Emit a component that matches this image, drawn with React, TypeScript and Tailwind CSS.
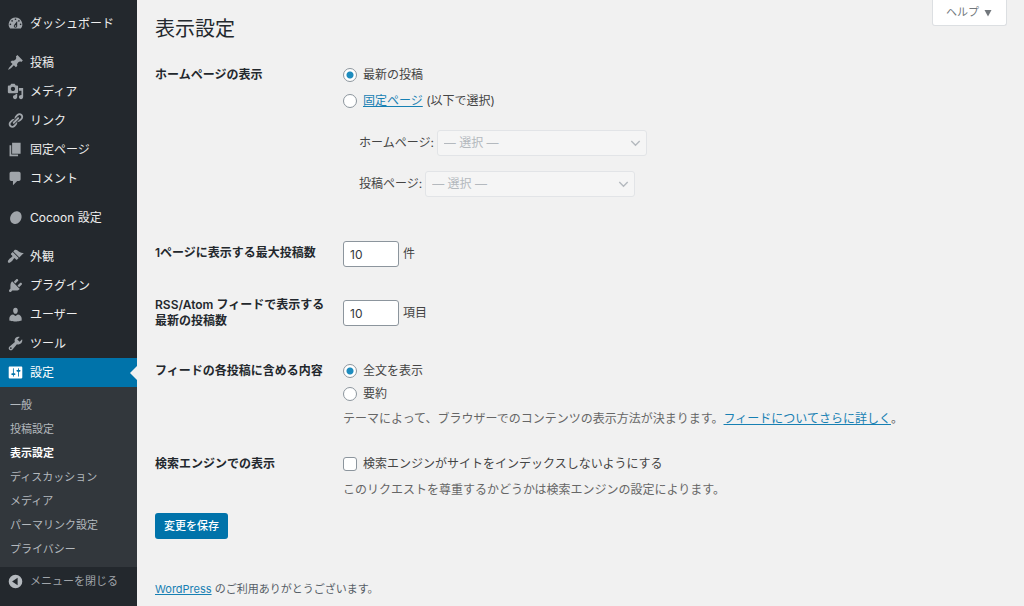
import type { ReactNode } from 'react';

const icons = {
    dashboard: "M3.76 16h12.48A7.998 7.998 0 0 0 10 3a7.998 7.998 0 0 0-6.24 13zM10 4c.55 0 1 .45 1 1s-.45 1-1 1-1-.45-1-1 .45-1 1-1zM6 6c.55 0 1 .45 1 1s-.45 1-1 1-1-.45-1-1 .45-1 1-1zm8 0c.55 0 1 .45 1 1s-.45 1-1 1-1-.45-1-1 .45-1 1-1zm-5.37 5.55L12 7v6c0 1.1-.9 2-2 2s-2-.9-2-2c0-.57.24-1.08.63-1.45zM4 10c.55 0 1 .45 1 1s-.45 1-1 1-1-.45-1-1 .45-1 1-1zm12 0c.55 0 1 .45 1 1s-.45 1-1 1-1-.45-1-1 .45-1 1-1zm-5 3c0-.55-.45-1-1-1s-1 .45-1 1 .45 1 1 1 1-.45 1-1z",
    post: "M10.44 3.02l1.82-1.82 6.36 6.35-1.83 1.82c-1.05-.68-2.48-.57-3.41.36l-.75.75c-.92.93-1.04 2.35-.35 3.41l-1.83 1.82-2.41-2.41-2.8 2.79c-.42.42-3.38 2.71-3.8 2.29s1.86-3.39 2.28-3.81l2.79-2.79L4.1 9.36l1.83-1.82c1.05.69 2.48.57 3.4-.36l.75-.75c.93-.92 1.05-2.35.36-3.41z",
    media: "M13 11V4c0-.55-.45-1-1-1h-1.67L9 1H5L3.67 3H2c-.55 0-1 .45-1 1v7c0 .55.45 1 1 1h10c.55 0 1-.45 1-1zM7 4.5c1.38 0 2.5 1.12 2.5 2.5S8.38 9.5 7 9.5 4.5 8.38 4.5 7 5.62 4.5 7 4.5zM14 6h5v10.5c0 1.38-1.12 2.5-2.5 2.5S14 17.88 14 16.5s1.12-2.5 2.5-2.5c.17 0 .34.02.5.05V9h-3V6zm-4 8.05V13h2v3.5c0 1.38-1.12 2.5-2.5 2.5S7 17.88 7 16.5 8.12 14 9.5 14c.17 0 .34.02.5.05z",
    links: "M17.74 2.76c1.68 1.69 1.68 4.41 0 6.1l-1.53 1.52c-1.12 1.12-2.7 1.47-4.14 1.09l2.62-2.61.76-.77.76-.76c.84-.84.84-2.2 0-3.04-.84-.85-2.2-.85-3.04 0l-.77.76-3.38 3.38c-.37-1.44-.02-3.02 1.1-4.14l1.52-1.53c1.69-1.68 4.42-1.68 6.1 0zM8.59 13.43l5.34-5.34c.42-.42.42-1.1 0-1.52-.44-.43-1.13-.39-1.53 0l-5.33 5.34c-.42.42-.42 1.1 0 1.52.44.43 1.13.39 1.52 0zm-.76 2.29l4.14-4.15c.38 1.44.03 3.02-1.09 4.14l-1.52 1.53c-1.69 1.68-4.41 1.68-6.1 0-1.68-1.68-1.68-4.42 0-6.1l1.53-1.52c1.12-1.12 2.7-1.47 4.14-1.1l-4.14 4.15c-.85.84-.85 2.2 0 3.05.84.84 2.2.84 3.04 0z",
    page: "M6 15V2h10v13H6zm-1 1h8v2H3V5h2v11z",
    comments: "M5 2h9c1.1 0 2 .9 2 2v7c0 1.1-.9 2-2 2h-2l-5 5v-5H5c-1.1 0-2-.9-2-2V4c0-1.1.9-2 2-2z",
    cocoon: "M12 2.6c3.6.4 5.6 3.6 5.1 7.4-.6 4.4-4 8-8 7.6C5.3 17.2 3.2 13.8 3.7 10.2 4.3 5.9 8 2.2 12 2.6z",
    appearance: "M14.48 11.06L7.41 3.99l1.5-1.5c.5-.56 2.3-.47 3.51.32 1.21.8 1.43 1.28 2.91 2.1 1.18.64 2.45 1.26 4.45.85zm-.71.71L6.7 4.7 4.93 6.47c-.39.39-.39 1.02 0 1.41l1.06 1.06c.39.39.39 1.03 0 1.42-.6.6-1.43 1.11-2.21 1.69-.35.26-.7.53-1.01.84C1.43 14.23.4 16.08 1.4 17.07c.99 1 2.84-.03 4.18-1.36.31-.31.58-.66.85-1.02.57-.78 1.08-1.61 1.69-2.21.39-.39 1.02-.39 1.41 0l1.06 1.06c.39.39 1.02.39 1.41 0z",
    plugins: "M13.11 4.36L9.87 7.6 8 5.73l3.24-3.24c.35-.34 1.05-.2 1.56.32.52.51.66 1.21.31 1.55zm-8 1.77l.91-1.12 9.01 9.01-1.19.84c-.71.71-2.63 1.16-3.82 1.16H6.14L4.9 17.26c-.59.59-1.54.59-2.12 0-.59-.58-.59-1.53 0-2.12l1.24-1.24v-3.88c0-1.13.4-3.19 1.09-3.89zm7.26 3.97l3.24-3.24c.34-.35 1.04-.21 1.55.31.52.51.66 1.21.31 1.55l-3.24 3.25z",
    users: "M10 9.25c-2.27 0-2.73-3.44-2.73-3.44C7 4.02 7.82 2 9.97 2c2.16 0 2.98 2.02 2.71 3.81 0 0-.41 3.44-2.68 3.44zm0 2.57L12.72 10c2.39 0 4.52 2.33 4.52 4.53v2.49s-3.65 1.13-7.24 1.13c-3.65 0-7.24-1.13-7.24-1.13v-2.49c0-2.25 1.94-4.48 4.47-4.48z",
    tools: "M16.68 9.77c-1.34 1.34-3.3 1.67-4.95.99l-5.41 6.52c-.99.99-2.59.99-3.58 0s-.99-2.59 0-3.57l6.52-5.42c-.68-1.65-.35-3.61.99-4.95 1.28-1.28 3.12-1.62 4.72-1.06l-2.89 2.89 2.82 2.82 2.86-2.87c.53 1.58.18 3.39-1.08 4.65zM3.81 16.21c.4.39 1.04.39 1.43 0 .4-.4.4-1.04 0-1.43-.39-.4-1.03-.4-1.43 0-.39.39-.39 1.03 0 1.43z",
    settings: "M18 16V4c0-.55-.45-1-1-1H3c-.55 0-1 .45-1 1v12c0 .55.45 1 1 1h14c.55 0 1-.45 1-1zM8 11h1c.55 0 1 .45 1 1s-.45 1-1 1H8v1.5c0 .28-.22.5-.5.5s-.5-.22-.5-.5V13H6c-.55 0-1-.45-1-1s.45-1 1-1h1V5.5c0-.28.22-.5.5-.5s.5.22.5.5V11zm5-2h-1c-.55 0-1-.45-1-1s.45-1 1-1h1V5.5c0-.28.22-.5.5-.5s.5.22.5.5V7h1c.55 0 1 .45 1 1s-.45 1-1 1h-1v5.5c0 .28-.22.5-.5.5s-.5-.22-.5-.5V9z",
    collapse: "M10 2a8 8 0 1 0 0 16 8 8 0 0 0 0-16zM12.5 5.5v9L6 10z",
};

type IconName = keyof typeof icons;

const menuGroups: { icon: IconName; label: string; active?: boolean }[][] = [
    [{ icon: "dashboard", label: "ダッシュボード" }],
    [
        { icon: "post", label: "投稿" },
        { icon: "media", label: "メディア" },
        { icon: "links", label: "リンク" },
        { icon: "page", label: "固定ページ" },
        { icon: "comments", label: "コメント" },
    ],
    [{ icon: "cocoon", label: "Cocoon 設定" }],
    [
        { icon: "appearance", label: "外観" },
        { icon: "plugins", label: "プラグイン" },
        { icon: "users", label: "ユーザー" },
        { icon: "tools", label: "ツール" },
        { icon: "settings", label: "設定", active: true },
    ],
];

const submenu = ["一般", "投稿設定", "表示設定", "ディスカッション", "メディア", "パーマリンク設定", "プライバシー"];

const radioClass = "size-3.5 shrink-0 appearance-none rounded-full border border-[#8c959d] bg-white checked:bg-[radial-gradient(circle,#1e8cbe_3px,#ffffff_4px)]";
const linkClass = "text-[#1780b3] underline";

function Icon({ name, className }: { name: IconName; className: string }) {
    return (
        <svg viewBox="0 0 20 20" fill="currentColor" fillRule="evenodd" aria-hidden="true" className={`size-[17px] shrink-0 ${className}`}>
            <path d={icons[name]} />
        </svg>
    );
}

function Sidebar() {
    return (
        <nav className="w-[137px] shrink-0 bg-[#23282d] pt-[9px] text-xs text-[#eeeeee]">
            <div className="flex flex-col gap-2.5">
                {menuGroups.map((group, i) => (
                    <ul key={i}>
                        {group.map((item) => (
                            <li key={item.label}>
                                <a
                                    href="#"
                                    className={`relative flex h-[29px] items-center gap-1.5 pl-[7px] ${item.active ? "bg-[#0073aa] text-white" : ""}`}
                                >
                                    <Icon name={item.icon} className={item.active ? "text-white" : "text-[#a0a5aa]"} />
                                    {item.label}
                                    {item.active && (
                                        <span className="absolute top-1/2 right-0 -translate-y-1/2 border-y-[7px] border-r-[7px] border-y-transparent border-r-[#f1f1f1]" />
                                    )}
                                </a>
                            </li>
                        ))}
                    </ul>
                ))}
            </div>
            <ul className="bg-[#32373c] py-1.5 text-[11px] leading-6 text-[#b4b9be]">
                {submenu.map((label) => (
                    <li key={label}>
                        <a href="#" className={`block pl-2.5 ${label === "表示設定" ? "font-bold text-white" : ""}`}>{label}</a>
                    </li>
                ))}
            </ul>
            <button type="button" className="flex h-[29px] items-center gap-1.5 pl-[7px] text-[11px] text-[#a0a5aa]">
                <Icon name="collapse" className="text-[#b4b9be]" />
                メニューを閉じる
            </button>
        </nav>
    );
}

function Row({ label, htmlFor, className, children }: { label: ReactNode; htmlFor?: string; className: string; children: ReactNode }) {
    const labelClass = "w-[188px] shrink-0 self-start py-[17px] pr-2 leading-4 font-semibold text-[#23282d]";
    return (
        <div className="flex items-center" role={htmlFor ? undefined : "group"}>
            {htmlFor ? <label htmlFor={htmlFor} className={labelClass}>{label}</label> : <div className={labelClass}>{label}</div>}
            <div className={`grow ${className}`}>{children}</div>
        </div>
    );
}

function PageSelect({ id, label }: { id: string; label: string }) {
    return (
        <li className="flex items-center gap-[3px]">
            <label htmlFor={id}>{label}</label>
            <div className="relative w-[210px]">
                <select id={id} disabled className="h-[26px] w-full appearance-none rounded-[3px] border border-[#e2e4e7] bg-[#f5f5f5] px-1.5 text-[#b4b9be] opacity-100">
                    <option>— 選択 —</option>
                </select>
                <svg viewBox="0 0 12 8" fill="none" stroke="#b4b9be" strokeWidth="1.6" className="pointer-events-none absolute top-[10px] right-[6px] h-[7px] w-[11px]">
                    <path d="M1.2 1.2L6 6l4.8-4.8" />
                </svg>
            </div>
        </li>
    );
}

function NumberField({ id, unit }: { id: string; unit: string }) {
    return (
        <div className="flex items-center gap-1">
            <input id={id} type="number" defaultValue={10} className="h-[26px] w-14 appearance-none rounded-[3px] border border-[#8c959d] bg-white px-1.5 text-[#32373c] [&::-webkit-inner-spin-button]:appearance-none" />
            <span>{unit}</span>
        </div>
    );
}

export default function App() {
    return (
        <div lang="ja" className="flex min-h-screen bg-[#f1f1f1] font-['Inter','Noto_Sans_CJK_JP',sans-serif] text-xs text-[#444444]">
            <Sidebar />
            <div className="flex min-w-0 grow flex-col pr-[17px] pl-[18px]">
                <header className="flex items-start justify-between">
                    <h1 className="pt-[13px] pb-[5px] text-xl leading-8 text-[#23282d]">表示設定</h1>
                    <button type="button" className="flex h-[26px] items-center gap-1 rounded-b-[3px] border border-t-0 border-[#dcdfe2] bg-white px-[13px] text-[11px] text-[#72777c]">
                        ヘルプ
                        <svg viewBox="0 0 10 10" fill="currentColor" className="size-2.5"><path d="M1.5 2h7L5 8.5z" /></svg>
                    </button>
                </header>

                <form>
                    <Row label="ホームページの表示" className="pt-[13px] pb-[31px]">
                        <div className="flex flex-col gap-0.5 leading-6">
                            <label className="flex items-center gap-1.5">
                                <input type="radio" name="front" defaultChecked className={radioClass} />
                                最新の投稿
                            </label>
                            <label className="flex items-center gap-1.5">
                                <input type="radio" name="front" className={radioClass} />
                                <span><a href="#" className={linkClass}>固定ページ</a> (以下で選択)</span>
                            </label>
                        </div>
                        <ul className="flex flex-col gap-[15px] pt-[17px] pl-4">
                            <PageSelect id="page-on-front" label="ホームページ:" />
                            <PageSelect id="page-for-posts" label="投稿ページ:" />
                        </ul>
                    </Row>
                    <Row label="1ページに表示する最大投稿数" htmlFor="posts-per-page" className="py-[13px]">
                        <NumberField id="posts-per-page" unit="件" />
                    </Row>
                    <Row label={<>RSS/Atom フィードで表示する<br />最新の投稿数</>} htmlFor="posts-per-rss" className="py-[13px]">
                        <NumberField id="posts-per-rss" unit="項目" />
                    </Row>
                    <Row label="フィードの各投稿に含める内容" className="pt-[13px] pb-2">
                        <div className="leading-[23px]">
                            <label className="flex items-center gap-1.5">
                                <input type="radio" name="rss" defaultChecked className={radioClass} />
                                全文を表示
                            </label>
                            <label className="flex items-center gap-1.5">
                                <input type="radio" name="rss" className={radioClass} />
                                要約
                            </label>
                        </div>
                        <p className="pt-0.5 leading-6 text-[#666666]">
                            テーマによって、ブラウザーでのコンテンツの表示方法が決まります。<a href="#" className={linkClass}>フィードについてさらに詳しく</a>。
                        </p>
                    </Row>
                    <Row label="検索エンジンでの表示" className="pt-[13px] pb-[11px]">
                        <label className="flex items-center gap-1.5 leading-6">
                            <input type="checkbox" className="size-3.5 shrink-0 appearance-none rounded-[3px] border border-[#8c959d] bg-white checked:bg-[#1e8cbe]" />
                            検索エンジンがサイトをインデックスしないようにする
                        </label>
                        <p className="pt-0.5 leading-6 text-[#666666]">このリクエストを尊重するかどうかは検索エンジンの設定によります。</p>
                    </Row>
                    <button type="submit" className="h-[26px] rounded-[3px] bg-[#0073aa] px-[9px] text-[11px] font-medium text-white">変更を保存</button>
                </form>

                <footer className="mt-auto pb-[9px] text-[11px] leading-4 text-[#555d66]">
                    <a href="#" className={linkClass}>WordPress</a> のご利用ありがとうございます。
                </footer>
            </div>
        </div>
    );
}
